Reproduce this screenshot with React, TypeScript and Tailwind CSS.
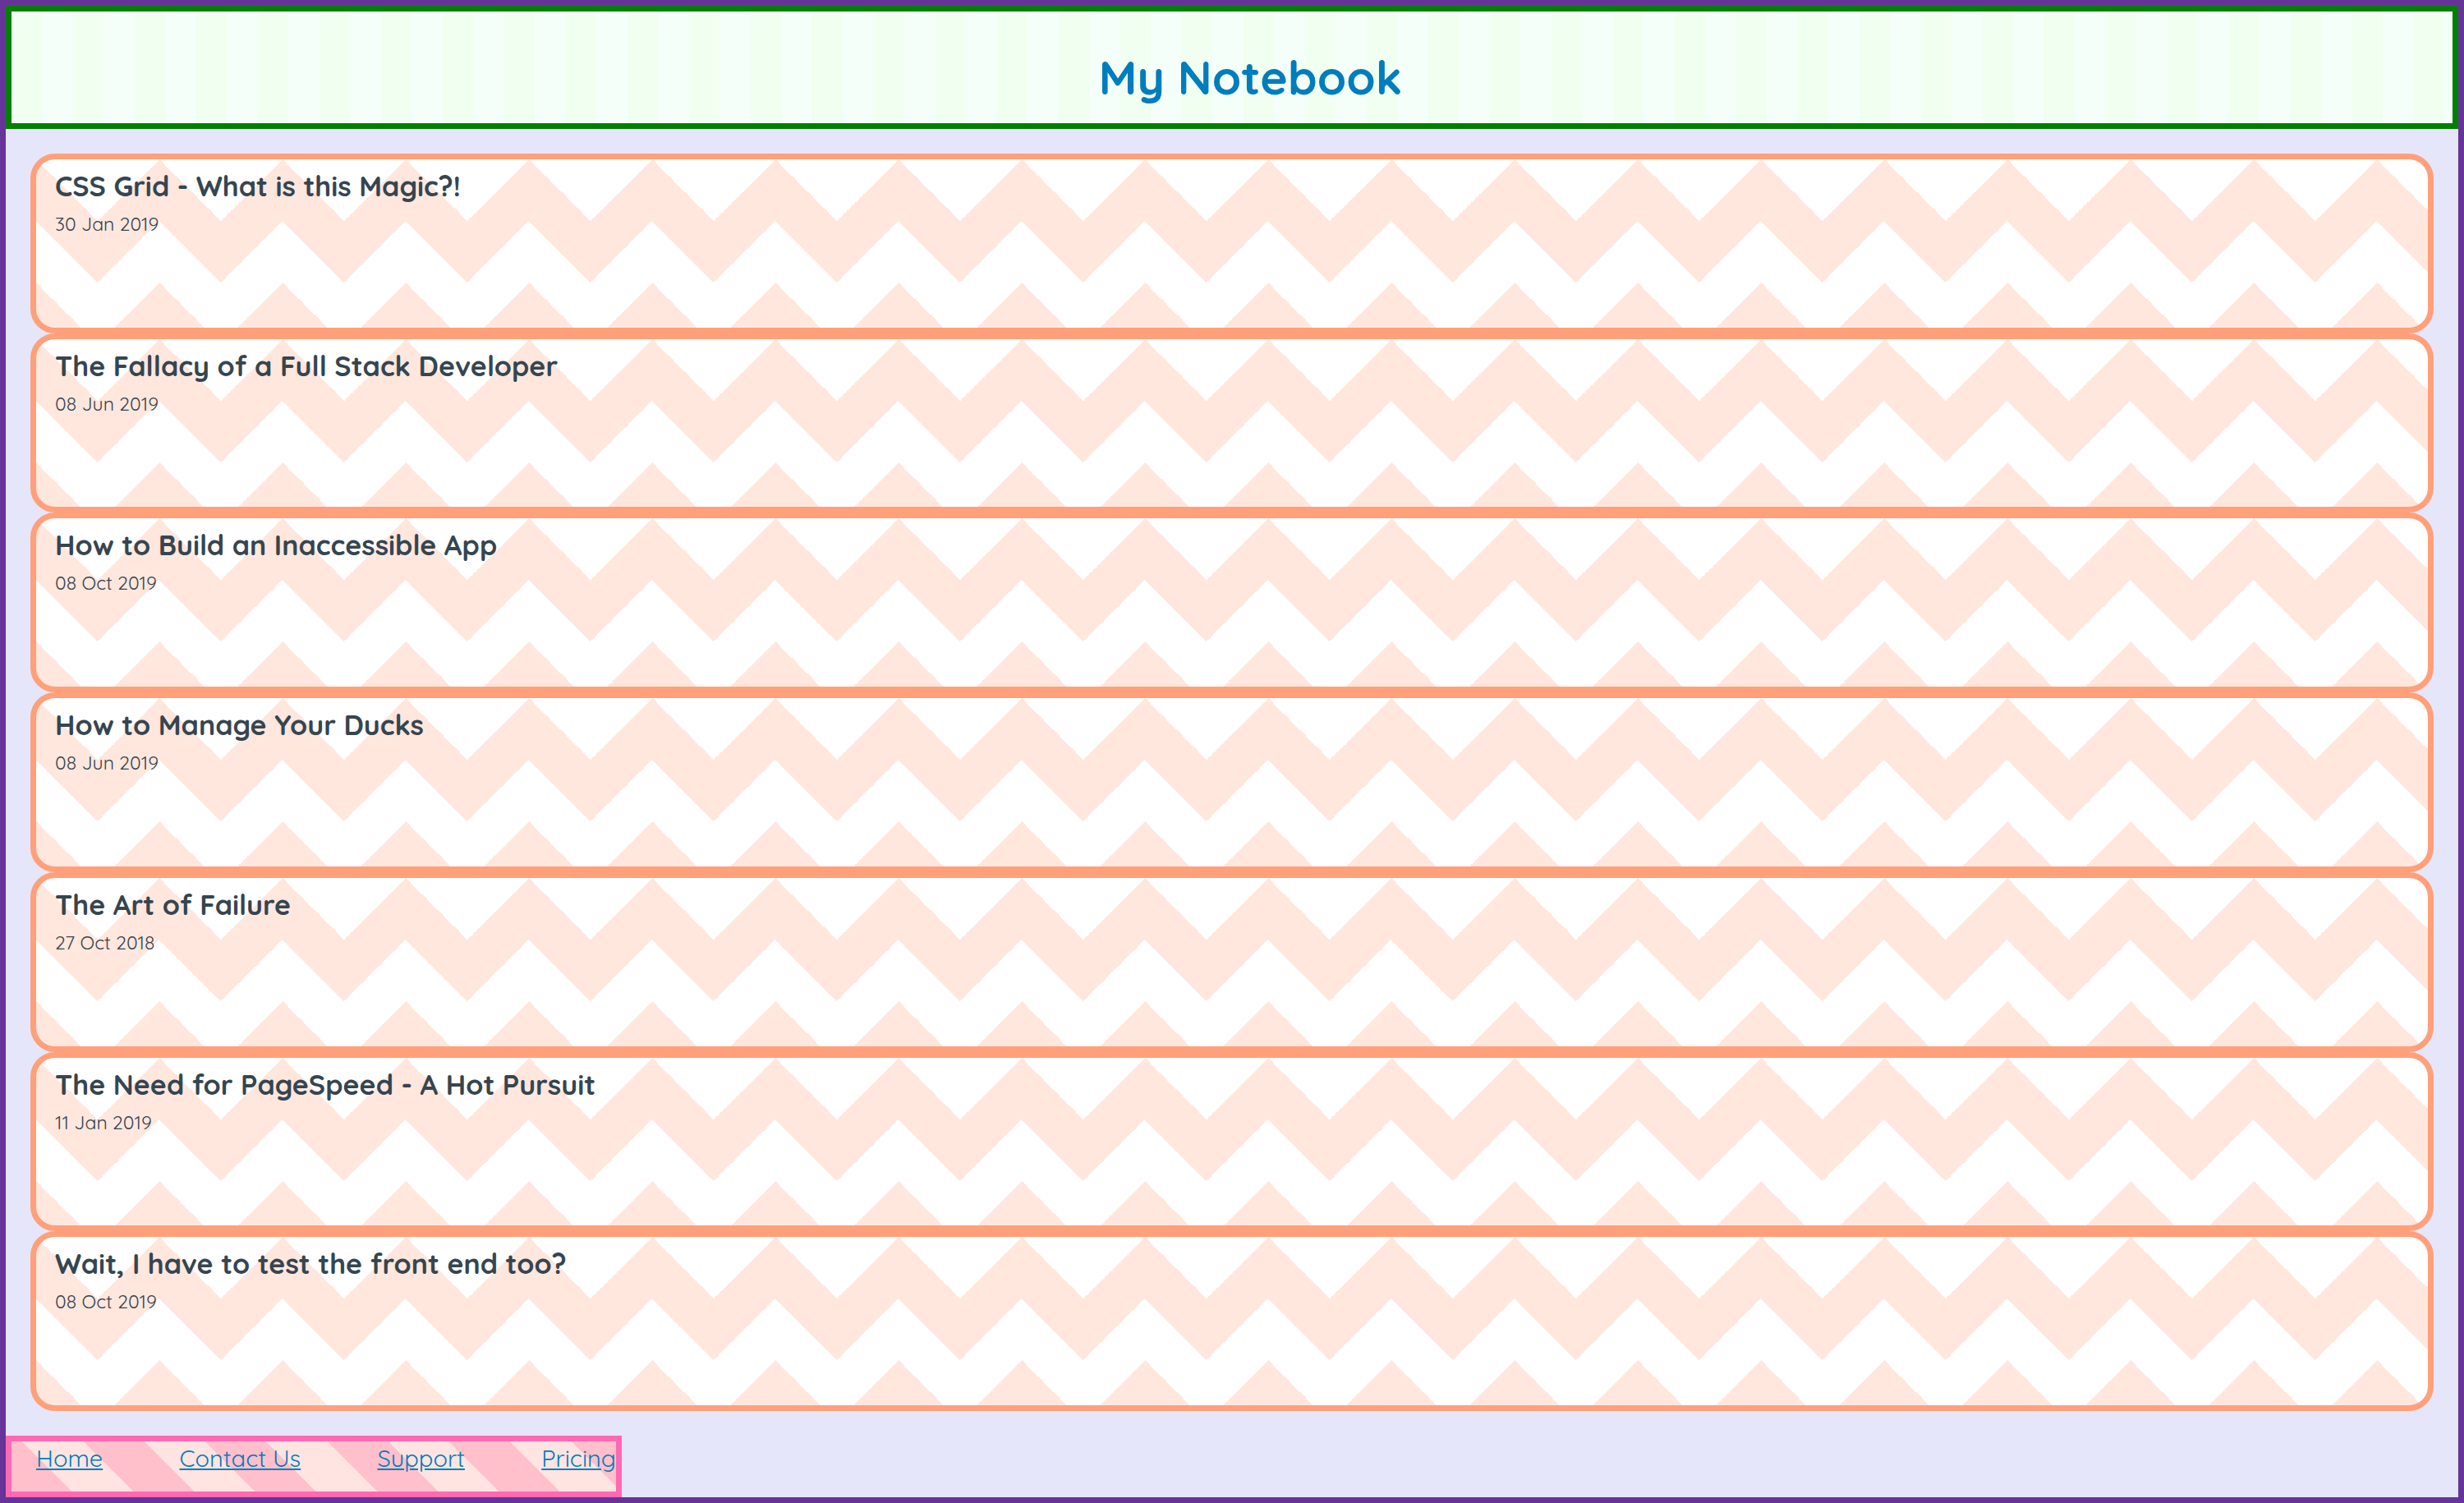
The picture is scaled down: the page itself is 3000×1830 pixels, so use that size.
const notes = [
  { title: 'CSS Grid - What is this Magic?!', date: '30 Jan 2019' },
  { title: 'The Fallacy of a Full Stack Developer', date: '08 Jun 2019' },
  { title: 'How to Build an Inaccessible App', date: '08 Oct 2019' },
  { title: 'How to Manage Your Ducks', date: '08 Jun 2019' },
  { title: 'The Art of Failure', date: '27 Oct 2018' },
  { title: 'The Need for PageSpeed - A Hot Pursuit', date: '11 Jan 2019' },
  { title: 'Wait, I have to test the front end too?', date: '08 Oct 2019' },
];

const links = ['Home', 'Contact Us', 'Support', 'Pricing'];

function Note({ title, date }: { title: string; date: string }) {
  return (
    <li className="flex-1 rounded-[30px] border-[7px] border-[#ffa07a] bg-[#ffe7de] bg-[image:linear-gradient(135deg,white_25%,transparent_25%),linear-gradient(225deg,white_25%,transparent_25%),linear-gradient(315deg,white_25%,transparent_25%),linear-gradient(45deg,white_25%,transparent_25%)] bg-[length:150px_150px] bg-[position:75px_0,75px_0,0_0,0_0] px-[23px] pt-[11px] pb-6">
      <h2 className="text-[34px] leading-[44px] font-bold">{title}</h2>
      <p className="mt-[9px] text-[23px] leading-[30px] font-normal">{date}</p>
    </li>
  );
}

export default function App() {
  return (
    <div className="flex min-h-screen flex-col border-[7px] border-[#663399] bg-[#e6e6fa] font-[Quicksand,Inter,sans-serif] text-[#36454f]">
      <header className="flex h-[150px] items-center justify-center border-[7px] border-[#008000] bg-[image:linear-gradient(90deg,#f0fff0_50%,#f5fffa_50%)] bg-[length:75px_100%] pt-6 pl-[45px]">
        <h1 className="text-[57px] leading-[68px] font-bold text-[#007dbc]">My Notebook</h1>
      </header>
      <main className="flex flex-1 flex-col p-[30px]">
        <ul className="flex flex-1 flex-col">
          {notes.map((note) => (
            <Note key={note.title} {...note} />
          ))}
        </ul>
      </main>
      <footer className="h-[75px] w-[25vw] border-[7px] border-[#ff69b4] bg-[repeating-linear-gradient(45deg,#ffc0cb_0px,#ffc0cb_52px,#ffe4e1_52px,#ffe4e1_105px)] pl-[30px]">
        <nav className="flex justify-between pt-[2px] text-[29px] leading-[36px] font-normal text-[#007dbc]">
          {links.map((link) => (
            <a key={link} href="#" className="underline">
              {link}
            </a>
          ))}
        </nav>
      </footer>
    </div>
  );
}
